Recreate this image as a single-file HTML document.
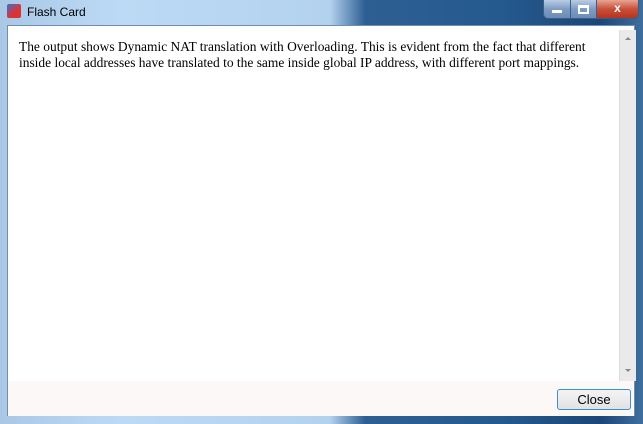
<!DOCTYPE html>
<html><head><style>
body{margin:0;width:643px;height:424px;overflow:hidden;font-family:"Liberation Sans",sans-serif;}
.win{position:absolute;left:0;top:0;width:643px;height:424px;
background:linear-gradient(90deg,#a9c8e6 0,#bcdaf5 120px,#b3d2ee 330px,#2e5f93 365px,#255a8f 500px,#1c4677 600px,#3f6f9e 643px);}
.client{position:absolute;left:7px;top:25px;width:628px;height:391px;background:#fff;border:1px solid #6d8fb3;box-sizing:border-box;}
.title{position:absolute;left:27px;top:5px;font-size:12px;color:#000;}
.icon{position:absolute;left:7px;top:4px;width:14px;height:14px;background:linear-gradient(135deg,#3a6fd0,#d33 60%);border-radius:2px;}
.text{position:absolute;left:11px;top:13px;width:572px;font-family:"Liberation Serif",serif;font-size:13.45px;line-height:16px;color:#000;}
.sb{position:absolute;left:611px;top:4px;width:16px;height:351px;background:#eaeaea;border-left:1px solid #ddd;}
.footer{position:absolute;left:0;top:355px;width:626px;height:35px;background:#fcf8f8;}
.close{position:absolute;left:549px;top:8px;width:74px;height:21px;box-sizing:border-box;border:1px solid #3c8fd0;border-radius:3px;background:linear-gradient(#f4f4f4,#e2e2e2);font-size:13px;text-align:center;line-height:19px;}
.btns{position:absolute;left:543px;top:0;height:18px;width:94px;border:1px solid #3b5e86;border-top:none;border-radius:0 0 5px 5px;overflow:hidden;display:flex;}
.b{height:18px;border-right:1px solid #3b5e86;background:linear-gradient(#b9cde4,#7e9cc3 50%,#6c8cb6);}
.x{background:linear-gradient(#e9a493,#c7503a 50%,#b8331f);border:none;}
</style></head><body>
<div class="win"></div>
<div class="icon"></div><div class="title">Flash Card</div>
<div class="btns"><div class="b" style="width:26px;position:relative"><div style="position:absolute;left:8px;top:10px;width:10px;height:3px;background:#fff"></div></div><div class="b" style="width:25px;position:relative"><div style="position:absolute;left:7px;top:5px;border:2px solid #fff;border-top-width:3px;width:7px;height:4px"></div></div><div class="b x" style="flex:1;color:#fff;font-weight:bold;font-size:12px;text-align:center;line-height:17px">x</div></div>
<div class="client">
<div class="text">The output shows Dynamic NAT translation with Overloading. This is evident from the fact that different inside local addresses have translated to the same inside global IP address, with different port mappings.</div>
<div class="sb"><div style="position:absolute;left:5px;top:7px;width:0;height:0;border:3px solid transparent;border-bottom-color:#888;border-top:none"></div><div style="position:absolute;left:5px;top:339px;width:0;height:0;border:3px solid transparent;border-top-color:#888;border-bottom:none"></div></div>
<div class="footer"><div class="close">Close</div></div>
</div>
</body></html>
